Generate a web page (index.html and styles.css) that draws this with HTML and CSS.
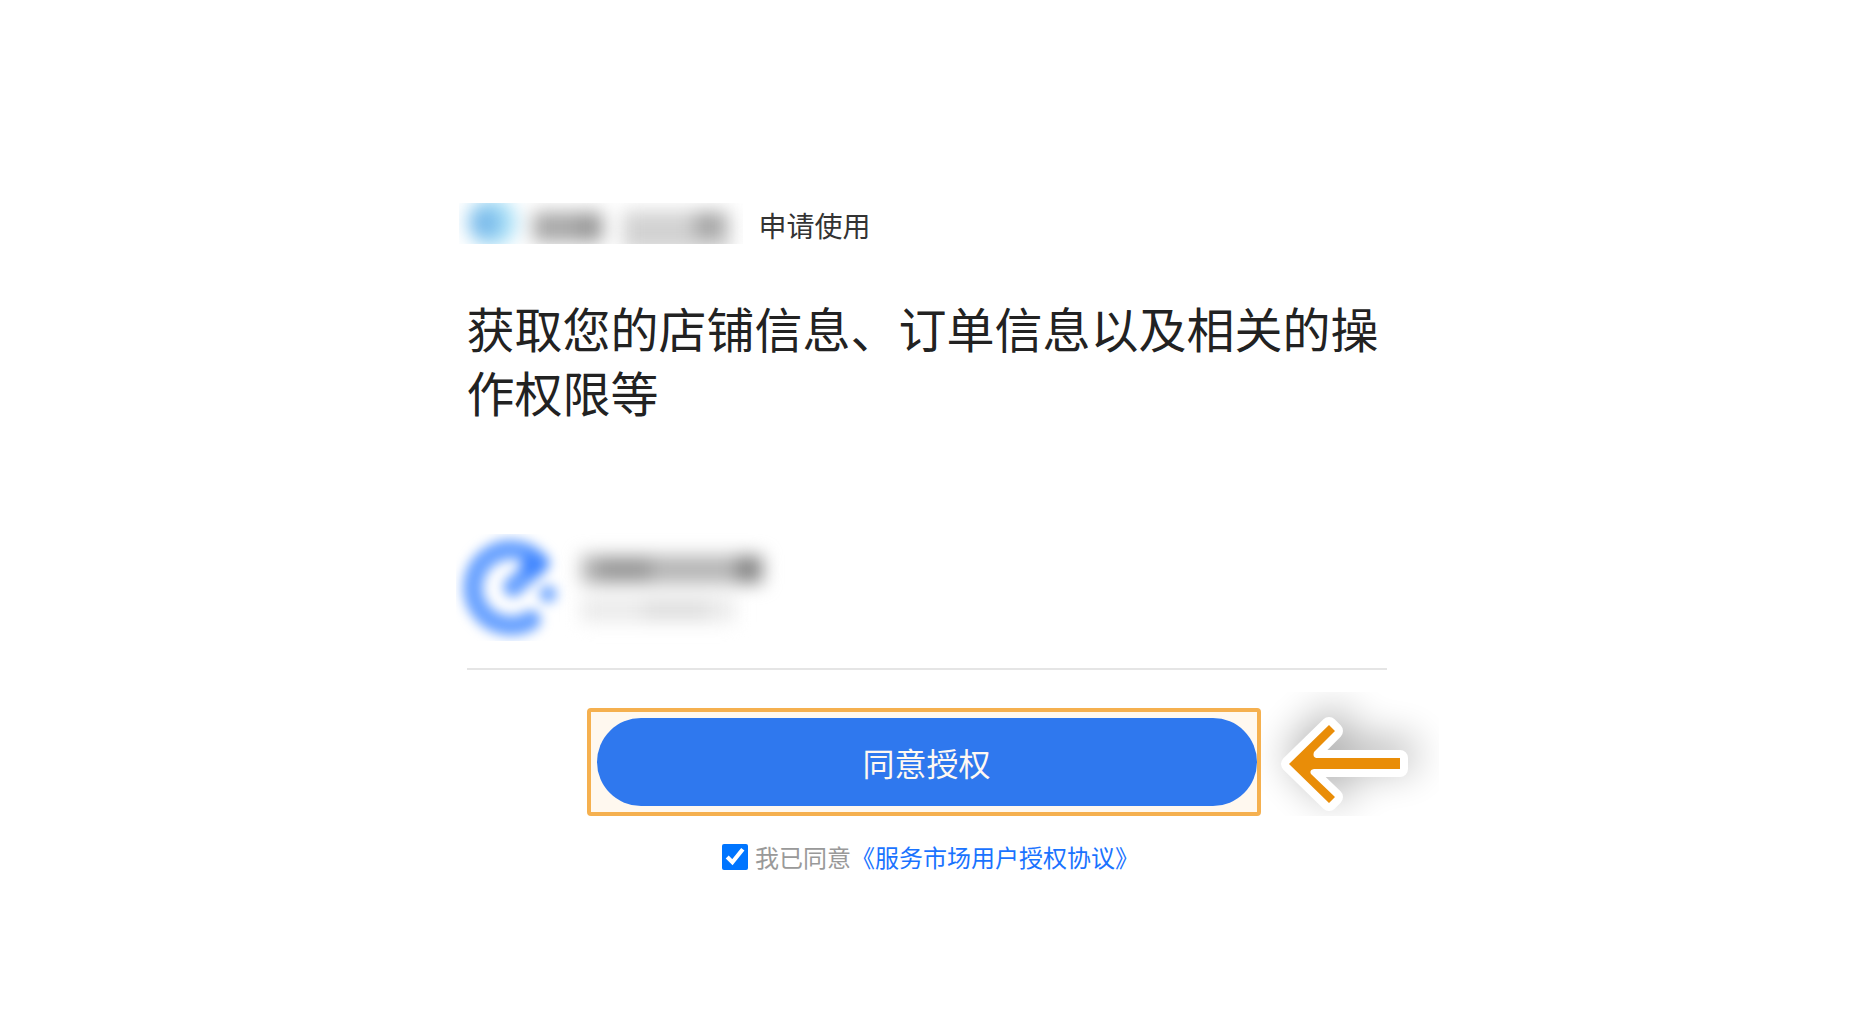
FILE: index.html
```html
<!DOCTYPE html>
<html lang="zh-CN">
<head>
<meta charset="utf-8">
<meta name="viewport" content="width=device-width, initial-scale=1">
<title>授权</title>
<link rel="stylesheet" href="styles.css">
</head>
<body>
<main class="auth">
  <header class="app">
    <svg class="app-name" viewBox="0 0 284 41" aria-hidden="true">
      <defs>
        <filter id="soft" x="-30%" y="-80%" width="160%" height="260%" color-interpolation-filters="sRGB"><feGaussianBlur stdDeviation="9"/></filter>
      </defs>
      <g filter="url(#soft)">
        <circle cx="33" cy="19" r="25" fill="#a9e0f7"/>
        <circle cx="26" cy="20" r="15" fill="#78b8ea"/>
        <rect x="74" y="9" width="70" height="30" fill="#a8a8a8"/>
        <rect x="120" y="11" width="20" height="26" fill="#969696"/>
        <rect x="164" y="8" width="108" height="40" fill="#d2d2d2"/>
        <rect x="236" y="10" width="28" height="24" fill="#a2a2a2"/>
      </g>
    </svg>
    <span>申请使用</span>
  </header>

  <h1 class="scope">获取您的店铺信息、订单信息以及相关的操作权限等</h1>

  <section class="shop">
    <svg class="shop-info" viewBox="0 0 340 128" aria-hidden="true">
      <defs>
        <filter id="logoBlur" x="-20%" y="-20%" width="140%" height="140%" color-interpolation-filters="sRGB"><feGaussianBlur stdDeviation="6"/></filter>
        <filter id="textBlur" x="-20%" y="-50%" width="140%" height="200%" color-interpolation-filters="sRGB"><feGaussianBlur stdDeviation="9"/></filter>
      </defs>
      <g filter="url(#logoBlur)">
        <path d="M84 101 A38 38 0 1 1 93 44 L66 68" fill="none" stroke="#6ba3ff" stroke-width="20" stroke-linejoin="round" stroke-linecap="round"/>
        <path d="M78 32 L101 43 L90 56 L72 56 Z" fill="#4287ff"/>
        <circle cx="101" cy="75" r="9" fill="#7aadff"/>
      </g>
      <g filter="url(#textBlur)">
        <rect x="134" y="36" width="182" height="29" fill="#b6b6b6"/>
        <rect x="150" y="40" width="54" height="21" fill="#969696"/>
        <rect x="290" y="38" width="24" height="24" fill="#808080"/>
        <rect x="134" y="78" width="154" height="25" fill="#ebebeb"/>
        <rect x="196" y="83" width="66" height="16" fill="#dcdcdc"/>
      </g>
    </svg>
  </section>

  <div class="action">
    <button class="agree" type="button">同意授权</button>
    <svg class="arrow" viewBox="0 0 178 124" aria-hidden="true">
      <defs>
        <filter id="arrowShadow" filterUnits="userSpaceOnUse" x="-80" y="-80" width="340" height="290"><feGaussianBlur stdDeviation="20"/></filter>
      </defs>
      <path transform="translate(6 -9)" filter="url(#arrowShadow)" opacity=".32" d="M28 72 L68 33 L74 39 L53 61 Q51 66 56 66 H139 V77 H53 Q47 77 50 82 L74 105 L68 111 Z" stroke="#000" stroke-width="18" stroke-linejoin="round"/>
      <path d="M28 72 L68 33 L74 39 L53 60 Q51 66 57 66 H139 V77 H53 Q48 78 50 82 L74 105 L68 111 Z" fill="#fff" stroke="#fff" stroke-width="16" stroke-linejoin="round"/>
      <path d="M28 72 L68 33 L74 39 L53 60 Q51 66 57 66 H139 V77 H53 Q48 78 50 82 L74 105 L68 111 Z" fill="#e98d08"/>
    </svg>
  </div>

  <div class="terms">
    <input class="check" type="checkbox" id="agree" checked>
    <label for="agree">我已同意</label><a href="#">《服务市场用户授权协议》</a>
  </div>
</main>
</body>
</html>
```
FILE: styles.css
```css
* {
  box-sizing: border-box;
}

body {
  margin: 0;
  background: #fff;
  color: #222;
  font-family: "Microsoft YaHei", "Noto Sans CJK SC", sans-serif;
}

.auth {
  max-width: 920px;
  margin: 0 auto;
  padding: 203px 0 80px;
}

.app {
  display: flex;
  align-items: center;
  gap: 16px;
  margin-left: -8px;
  font-size: 28px;
  line-height: 44px;
  color: #333;
}

.app-name {
  width: 284px;
  height: 41px;
  margin-bottom: 3px;
  overflow: hidden;
}

.scope {
  margin: 48px 0 0;
  font-size: 48px;
  font-weight: 400;
  line-height: 64px;
}

.shop {
  margin-top: 96px;
  padding-bottom: 21px;
  border-bottom: 2px solid #e5e5e5;
}

.shop-info {
  display: block;
  width: 340px;
  height: 128px;
  margin-left: -20px;
}

.action {
  position: relative;
  width: fit-content;
  margin: 48px auto 0;
}

/* highlight frame around the button */
.action::before {
  content: "";
  position: absolute;
  inset: -10px -4px -10px -10px;
  z-index: -1;
  border: 4px solid #f5b04f;
  border-radius: 4px;
  background: #fff8ef;
}

.agree {
  display: block;
  width: 660px;
  max-width: 100%;
  height: 88px;
  padding: 0;
  border: 0;
  border-radius: 44px;
  background: #2f78ee;
  color: #fff8f2;
  font: inherit;
  font-size: 32px;
}

.arrow {
  position: absolute;
  left: calc(100% + 4px);
  top: -26px;
  width: 178px;
  height: 124px;
  overflow: hidden;
}

.terms {
  display: flex;
  align-items: center;
  justify-content: center;
  margin-top: 31px;
  font-size: 24px;
  line-height: 40px;
  color: #999;
}

.check {
  width: 26px;
  height: 26px;
  margin: 0 7px 0 8px;
  accent-color: #0075ff;
}

.terms a {
  color: #1a73ff;
  text-decoration: none;
}
```
